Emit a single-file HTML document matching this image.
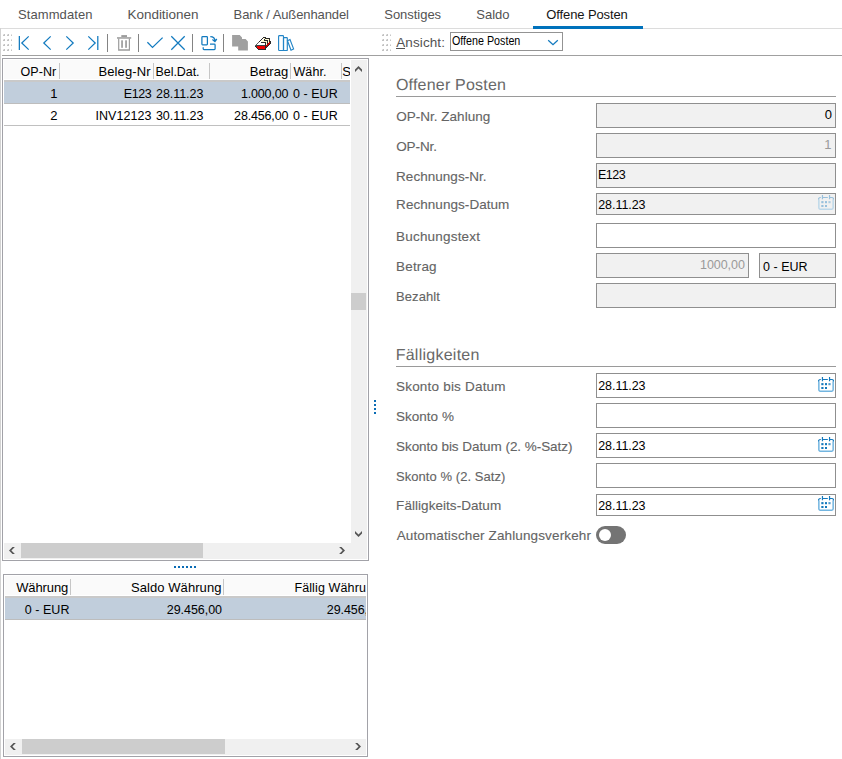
<!DOCTYPE html>
<html lang="de"><head><meta charset="utf-8"><title>Offene Posten</title>
<style>
*{box-sizing:border-box;margin:0;padding:0}
html,body{width:842px;height:759px;background:#fff;overflow:hidden}
body{position:relative;font-family:"Liberation Sans",sans-serif;font-size:13px;color:#000}
.a,.t,svg{position:absolute}
.t{white-space:pre;line-height:20px;height:20px}
.ln{position:absolute;background:#a0a0a0}
.grid{position:absolute;border:1px solid #a2a2a8;background:#fff;overflow:hidden}
.hd{position:absolute;background:#fafafa}
.hs{position:absolute;width:1px;background:#c6c6c6}
.sel{position:absolute;background:#c1cedc}
.sb{position:absolute;background:#f0f0f0}
.th{position:absolute;background:#cdcdcd}
.f{position:absolute;border:1px solid #8f8f8f;background:#fff}
.f.d{background:#f1f1f1}
.dot{position:absolute;width:2px;height:2px;background:#0a6cb5}
.sep{position:absolute;width:1px;height:18px;top:34px;background:#848484}
.clip{position:absolute;overflow:hidden}
.lb .t{-webkit-text-stroke:.12px #666}
</style></head>
<body>
<div class="a" style="left:0;top:28px;width:842px;height:1px;background:#dcdcdc"></div>
<div class="a" style="left:0;top:28px;width:1px;height:731px;background:#d2d2d2"></div>
<div class="a" style="left:533px;top:26px;width:110px;height:3px;background:#0072bc"></div>
<div class="ln" style="left:2px;top:55px;width:840px;height:1px"></div>
<div class="tabs" role="tablist"><span class="t" style="left:18px;top:5px;letter-spacing:0.08px;color:#535353">Stammdaten</span>
<span class="t" style="left:127.6px;top:5px;font-size:13.5px;letter-spacing:-0.05px;color:#535353">Konditionen</span>
<span class="t" style="left:233.6px;top:5px;letter-spacing:-0.1px;color:#535353">Bank / Außenhandel</span>
<span class="t" style="left:384.3px;top:5px;letter-spacing:-0.04px;color:#535353">Sonstiges</span>
<span class="t" style="left:476.3px;top:5px;letter-spacing:-0.01px;color:#535353">Saldo</span>
<span class="t" style="left:546.3px;top:5px;letter-spacing:-0.11px;color:#151515">Offene Posten</span></div>
<div class="toolbar" role="toolbar">
<svg class="grip" style="left:3px;top:34px" width="9" height="17" viewBox="0 0 9 17" shape-rendering="crispEdges"><rect x="0" y="0" width="2" height="2" fill="#c3c3c3"/><rect x="0" y="0" width="1" height="1" fill="#e4e4e4"/><rect x="4" y="0" width="2" height="2" fill="#c3c3c3"/><rect x="4" y="0" width="1" height="1" fill="#e4e4e4"/><rect x="8" y="0" width="1" height="1" fill="#e0e0e0"/><rect x="8" y="1" width="1" height="1" fill="#c6c6c6"/><rect x="0" y="5" width="2" height="2" fill="#c3c3c3"/><rect x="0" y="5" width="1" height="1" fill="#e4e4e4"/><rect x="4" y="5" width="2" height="2" fill="#c3c3c3"/><rect x="4" y="5" width="1" height="1" fill="#e4e4e4"/><rect x="8" y="5" width="1" height="1" fill="#e0e0e0"/><rect x="8" y="6" width="1" height="1" fill="#c6c6c6"/><rect x="0" y="10" width="2" height="2" fill="#c3c3c3"/><rect x="0" y="10" width="1" height="1" fill="#e4e4e4"/><rect x="4" y="10" width="2" height="2" fill="#c3c3c3"/><rect x="4" y="10" width="1" height="1" fill="#e4e4e4"/><rect x="8" y="10" width="1" height="1" fill="#e0e0e0"/><rect x="8" y="11" width="1" height="1" fill="#c6c6c6"/><rect x="0" y="15" width="2" height="2" fill="#c3c3c3"/><rect x="0" y="15" width="1" height="1" fill="#e4e4e4"/><rect x="4" y="15" width="2" height="2" fill="#c3c3c3"/><rect x="4" y="15" width="1" height="1" fill="#e4e4e4"/><rect x="8" y="15" width="1" height="1" fill="#e0e0e0"/><rect x="8" y="16" width="1" height="1" fill="#c6c6c6"/></svg>
<svg class="grip" style="left:382px;top:34px" width="9" height="17" viewBox="0 0 9 17" shape-rendering="crispEdges"><rect x="0" y="0" width="2" height="2" fill="#c3c3c3"/><rect x="0" y="0" width="1" height="1" fill="#e4e4e4"/><rect x="4" y="0" width="2" height="2" fill="#c3c3c3"/><rect x="4" y="0" width="1" height="1" fill="#e4e4e4"/><rect x="8" y="0" width="1" height="1" fill="#e0e0e0"/><rect x="8" y="1" width="1" height="1" fill="#c6c6c6"/><rect x="0" y="5" width="2" height="2" fill="#c3c3c3"/><rect x="0" y="5" width="1" height="1" fill="#e4e4e4"/><rect x="4" y="5" width="2" height="2" fill="#c3c3c3"/><rect x="4" y="5" width="1" height="1" fill="#e4e4e4"/><rect x="8" y="5" width="1" height="1" fill="#e0e0e0"/><rect x="8" y="6" width="1" height="1" fill="#c6c6c6"/><rect x="0" y="10" width="2" height="2" fill="#c3c3c3"/><rect x="0" y="10" width="1" height="1" fill="#e4e4e4"/><rect x="4" y="10" width="2" height="2" fill="#c3c3c3"/><rect x="4" y="10" width="1" height="1" fill="#e4e4e4"/><rect x="8" y="10" width="1" height="1" fill="#e0e0e0"/><rect x="8" y="11" width="1" height="1" fill="#c6c6c6"/><rect x="0" y="15" width="2" height="2" fill="#c3c3c3"/><rect x="0" y="15" width="1" height="1" fill="#e4e4e4"/><rect x="4" y="15" width="2" height="2" fill="#c3c3c3"/><rect x="4" y="15" width="1" height="1" fill="#e4e4e4"/><rect x="8" y="15" width="1" height="1" fill="#e0e0e0"/><rect x="8" y="16" width="1" height="1" fill="#c6c6c6"/></svg>
<svg style="left:0;top:28px" width="300" height="28" viewBox="0 0 300 28">
<g fill="none" stroke="#127abf" stroke-width="1.25">
<path d="M19.35 8v14M28.7 8.4 21.8 15l6.9 6.6"/>
<path d="M50.7 8.4 43.8 15l6.9 6.6"/>
<path d="M66.3 8.4 73.2 15l-6.9 6.6"/>
<path d="M88.3 8.4 95.2 15l-6.9 6.6M97.8 8v14"/>
<path d="M147.4 14.3 152.5 19.4 162.6 9.6"/>
<path d="M171.3 8.3 184.7 21.7M184.7 8.3 171.3 21.7"/>
<rect x="201.9" y="8.7" width="5.5" height="8.1" rx=".7"/>
<path d="M203.2 19.2v1.5a.8.8 0 0 0 .8.8h10.3a.8.8 0 0 0 .8-.8v-3.7a.8.8 0 0 0-.8-.8H210"/>
<path d="M210.3 8.7c2.8 0 4.6 1.5 4.6 4.3M212.4 11.6l2.5 1.9 1.9-2.5"/>
</g>
<g fill="#9c9c9c">
<rect x="121.3" y="7.1" width="5.7" height="1.9"/>
<rect x="117" y="9.2" width="14.2" height="1.5"/>
<path d="M118.1 10.6h11.9V22.8H118.1zM119.3 10.6V21.2h9.5V10.6z" fill-rule="evenodd"/>
<rect x="121.2" y="12.3" width="1.7" height="7.5"/>
<rect x="125.2" y="12.3" width="1.7" height="7.5"/>
</g>
<g fill="#a0a0a0">
<path d="M232.1 7.1h7.6l2.3 2.3v1.7h3.6l2.3 2.3v9.2h-9.7v-4h-6.1z"/>
</g>
<g fill="none" stroke="#2385c7" stroke-width="1.15">
<rect x="278.6" y="7.6" width="4.9" height="14.9" rx=".8"/>
<rect x="283.5" y="9.6" width="3.8" height="12.9" rx=".6"/>
<path d="M287.5 12.7 290 11.5 293.6 20.9 291 22.2z"/>
</g>
</svg>
<svg style="left:254px;top:36px" width="17" height="15" viewBox="0 0 17 15" shape-rendering="crispEdges"><rect x="9" y="1" width="3" height="1" fill="#2b2b2b"/><rect x="8" y="2" width="1" height="1" fill="#2b2b2b"/><rect x="9" y="2" width="2" height="1" fill="#fff8cf"/><rect x="11" y="2" width="5" height="1" fill="#2b2b2b"/><rect x="7" y="3" width="1" height="1" fill="#2b2b2b"/><rect x="8" y="3" width="2" height="1" fill="#ffffff"/><rect x="10" y="3" width="1" height="1" fill="#2b2b2b"/><rect x="11" y="3" width="4" height="1" fill="#fff8cf"/><rect x="15" y="3" width="1" height="1" fill="#2b2b2b"/><rect x="6" y="4" width="1" height="1" fill="#2b2b2b"/><rect x="7" y="4" width="3" height="1" fill="#fff8cf"/><rect x="10" y="4" width="4" height="1" fill="#2b2b2b"/><rect x="14" y="4" width="1" height="1" fill="#fff8cf"/><rect x="15" y="4" width="1" height="1" fill="#2b2b2b"/><rect x="5" y="5" width="1" height="1" fill="#2b2b2b"/><rect x="6" y="5" width="2" height="1" fill="#ffffff"/><rect x="8" y="5" width="5" height="1" fill="#fff8cf"/><rect x="13" y="5" width="1" height="1" fill="#2b2b2b"/><rect x="14" y="5" width="1" height="1" fill="#fff8cf"/><rect x="15" y="5" width="2" height="1" fill="#2b2b2b"/><rect x="4" y="6" width="1" height="1" fill="#606060"/><rect x="5" y="6" width="2" height="1" fill="#ffffff"/><rect x="7" y="6" width="5" height="1" fill="#2b2b2b"/><rect x="12" y="6" width="1" height="1" fill="#fff8cf"/><rect x="13" y="6" width="1" height="1" fill="#2b2b2b"/><rect x="14" y="6" width="1" height="1" fill="#fff8cf"/><rect x="15" y="6" width="1" height="1" fill="#c40000"/><rect x="16" y="6" width="1" height="1" fill="#2b2b2b"/><rect x="3" y="7" width="1" height="1" fill="#606060"/><rect x="4" y="7" width="7" height="1" fill="#ffffff"/><rect x="11" y="7" width="1" height="1" fill="#2b2b2b"/><rect x="12" y="7" width="1" height="1" fill="#fff8cf"/><rect x="13" y="7" width="1" height="1" fill="#2b2b2b"/><rect x="14" y="7" width="2" height="1" fill="#c40000"/><rect x="16" y="7" width="1" height="1" fill="#2b2b2b"/><rect x="2" y="8" width="1" height="1" fill="#606060"/><rect x="3" y="8" width="8" height="1" fill="#ffffff"/><rect x="11" y="8" width="1" height="1" fill="#2b2b2b"/><rect x="12" y="8" width="1" height="1" fill="#fff8cf"/><rect x="13" y="8" width="2" height="1" fill="#c40000"/><rect x="15" y="8" width="1" height="1" fill="#2b2b2b"/><rect x="1" y="9" width="1" height="1" fill="#606060"/><rect x="2" y="9" width="9" height="1" fill="#344848"/><rect x="11" y="9" width="1" height="1" fill="#2b2b2b"/><rect x="12" y="9" width="2" height="1" fill="#c40000"/><rect x="14" y="9" width="1" height="1" fill="#2b2b2b"/><rect x="1" y="10" width="1" height="1" fill="#2b2b2b"/><rect x="2" y="10" width="1" height="1" fill="#344848"/><rect x="3" y="10" width="8" height="1" fill="#f20000"/><rect x="11" y="10" width="1" height="1" fill="#2b2b2b"/><rect x="12" y="10" width="1" height="1" fill="#c40000"/><rect x="13" y="10" width="1" height="1" fill="#2b2b2b"/><rect x="2" y="11" width="1" height="1" fill="#2b2b2b"/><rect x="3" y="11" width="8" height="1" fill="#f20000"/><rect x="11" y="11" width="2" height="1" fill="#2b2b2b"/><rect x="3" y="12" width="1" height="1" fill="#2b2b2b"/><rect x="4" y="12" width="7" height="1" fill="#f20000"/><rect x="11" y="12" width="1" height="1" fill="#2b2b2b"/><rect x="4" y="13" width="8" height="1" fill="#2b2b2b"/></svg>
<div class="sep" style="left:107px"></div>
<div class="sep" style="left:138px"></div>
<div class="sep" style="left:192px"></div>
<div class="sep" style="left:223px"></div>
<span class="t" style="left:396.2px;top:33px;font-size:13.5px;letter-spacing:0.11px;color:#535353">Ansicht:</span>
<div class="a" style="left:396px;top:48px;width:9px;height:1px;background:#535353"></div>
<div class="f" style="left:450px;top:32px;width:113px;height:19px;border-color:#939393"></div>
<span class="t" style="left:452.4px;top:31px;font-size:12px;transform:scaleX(0.893);transform-origin:0 0">Offene Posten</span>
<svg style="left:546px;top:38px" width="14" height="9" viewBox="0 0 14 9"><path d="M2.2 2.3 7 6.7 11.8 2.3" fill="none" stroke="#127abf" stroke-width="1.3"/></svg>
</div>
<div class="grid" role="grid" style="left:2px;top:58px;width:367px;height:503px"><div class="hd" style="left:1px;top:1px;width:346px;height:19px"></div>
<div class="a" style="left:1px;top:21px;width:346px;height:2px;background:#c9c9c9"></div>
<div class="sel" style="left:1px;top:23px;width:346px;height:21px"></div>
<div class="a" style="left:1px;top:44px;width:346px;height:1px;background:#bdbdbd"></div>
<div class="a" style="left:1px;top:66px;width:346px;height:1px;background:#c0c0c0"></div>
<div class="hs" style="left:56px;top:4px;height:16px"></div>
<div class="hs" style="left:150px;top:4px;height:16px"></div>
<div class="hs" style="left:206px;top:4px;height:16px"></div>
<div class="hs" style="left:287px;top:4px;height:16px"></div>
<div class="hs" style="left:338px;top:4px;height:16px"></div>
<div class="sb" style="left:348px;top:1px;width:16px;height:499px"></div>
<div class="sb" style="left:1px;top:484px;width:348px;height:16px"></div>
<div class="th" style="left:348px;top:234px;width:15px;height:17px"></div>
<div class="th" style="left:18px;top:484px;width:182px;height:15px"></div>
<svg style="left:350px;top:5px" width="11" height="11" viewBox="0 0 11 11"><polygon points="5.5,2 9,5.5 9,7.9 5.5,4.4 2,7.9 2,5.5" fill="#555"/></svg>
<svg style="left:350px;top:469px" width="11" height="11" viewBox="0 0 11 11"><polygon points="5.5,8.9 9,5.4 9,3 5.5,6.5 2,3 2,5.4" fill="#555"/></svg>
<svg style="left:4px;top:486px" width="11" height="11" viewBox="0 0 11 11"><polygon points="2,5.5 5.5,9 7.9,9 4.4,5.5 7.9,2 5.5,2" fill="#555"/></svg>
<svg style="left:334px;top:486px" width="11" height="11" viewBox="0 0 11 11"><polygon points="8,5.5 4.5,9 2.1,9 5.6,5.5 2.1,2 4.5,2" fill="#555"/></svg>
<div class="clip" style="left:337px;top:1px;width:10px;height:20px"><span class="t" style="left:2.3px;top:2px">S</span></div>
<span class="t" style="left:17.5px;top:3px;font-size:12.5px;letter-spacing:0.07px">OP-Nr</span>
<span class="t" style="left:95.5px;top:3px;letter-spacing:0.1px">Beleg-Nr</span>
<span class="t" style="left:152.5px;top:3px;font-size:12.5px;letter-spacing:-0.06px">Bel.Dat.</span>
<span class="t" style="left:246.7px;top:3px;letter-spacing:0.03px">Betrag</span>
<span class="t" style="left:290.4px;top:3px;font-size:12.5px;letter-spacing:0.12px">Währ.</span>
<span class="t" style="left:47.3px;top:25px">1</span>
<span class="t" style="left:120.7px;top:25px;font-size:12.5px;letter-spacing:-0.37px">E123</span>
<span class="t" style="left:153px;top:25px;font-size:12.5px;letter-spacing:-0.05px">28.11.23</span>
<span class="t" style="left:238px;top:25px;font-size:12.5px;letter-spacing:-0.18px">1.000,00</span>
<span class="t" style="left:290px;top:25px;font-size:12.5px;letter-spacing:0.04px">0 - EUR</span>
<span class="t" style="left:47.3px;top:47px">2</span>
<span class="t" style="left:92.4px;top:47px;font-size:12.5px;letter-spacing:0.05px">INV12123</span>
<span class="t" style="left:152.9px;top:47px;font-size:12.5px;letter-spacing:-0.04px">30.11.23</span>
<span class="t" style="left:231.1px;top:47px;font-size:12.5px;letter-spacing:-0.16px">28.456,00</span>
<span class="t" style="left:290px;top:47px;font-size:12.5px;letter-spacing:0.04px">0 - EUR</span></div>
<div class="dot" style="left:174px;top:566px"></div>
<div class="dot" style="left:178px;top:566px"></div>
<div class="dot" style="left:182px;top:566px"></div>
<div class="dot" style="left:186px;top:566px"></div>
<div class="dot" style="left:190px;top:566px"></div>
<div class="dot" style="left:194px;top:566px"></div>
<div class="dot" style="left:374px;top:400px"></div>
<div class="dot" style="left:374px;top:404px"></div>
<div class="dot" style="left:374px;top:408px"></div>
<div class="dot" style="left:374px;top:412px"></div>
<div class="grid" role="grid" style="left:3px;top:574px;width:365px;height:183px"><div class="clip" style="left:0;top:0;width:362px;height:181px"><div class="hd" style="left:1px;top:1px;width:362px;height:19px"></div>
<div class="a" style="left:1px;top:21px;width:362px;height:2px;background:#c9c9c9"></div>
<div class="sel" style="left:1px;top:23px;width:362px;height:21px"></div>
<div class="a" style="left:1px;top:44px;width:362px;height:1px;background:#bdbdbd"></div>
<div class="hs" style="left:66px;top:4px;height:16px"></div>
<div class="hs" style="left:219px;top:4px;height:16px"></div>
<div class="sb" style="left:1px;top:164px;width:361px;height:16px"></div>
<div class="th" style="left:18px;top:164px;width:203px;height:15px"></div>
<svg style="left:4px;top:166px" width="11" height="11" viewBox="0 0 11 11"><polygon points="2,5.5 5.5,9 7.9,9 4.4,5.5 7.9,2 5.5,2" fill="#555"/></svg>
<svg style="left:349px;top:166px" width="11" height="11" viewBox="0 0 11 11"><polygon points="8,5.5 4.5,9 2.1,9 5.6,5.5 2.1,2 4.5,2" fill="#555"/></svg>
<span class="t" style="left:12.2px;top:3px;letter-spacing:-0.12px">Währung</span>
<span class="t" style="left:127px;top:3px;letter-spacing:0.07px">Saldo Währung</span>
<span class="t" style="left:290.4px;top:3px;font-size:12.5px;letter-spacing:0.12px">Fällig Währung</span>
<span class="t" style="left:20.7px;top:25px;font-size:12.5px;letter-spacing:0.05px">0 - EUR</span>
<span class="t" style="left:162.8px;top:25px;font-size:12.5px;letter-spacing:-0.05px">29.456,00</span>
<span class="t" style="left:322.8px;top:25px;font-size:12.5px;letter-spacing:-0.09px">29.456,00</span></div></div>
<div class="panel" role="form">
<span class="t" style="left:395.9px;top:76px;font-size:16px;letter-spacing:0.21px;color:#686868;text-rendering:geometricPrecision">Offener Posten</span>
<span class="t" style="left:395.7px;top:346px;font-size:16px;letter-spacing:0.25px;color:#686868;text-rendering:geometricPrecision">Fälligkeiten</span>
<div class="ln" style="left:396px;top:96px;width:440px;height:1px;background:#9a9a9a"></div>
<div class="ln" style="left:396px;top:366px;width:440px;height:1px;background:#9a9a9a"></div>
<div class="lb"><span class="t" style="left:396.2px;top:107px;font-size:13.5px;letter-spacing:0.02px;color:#646464">OP-Nr. Zahlung</span>
<span class="t" style="left:396.2px;top:137px;font-size:13.5px;letter-spacing:-0.1px;color:#646464">OP-Nr.</span>
<span class="t" style="left:396.1px;top:167px;font-size:13.5px;letter-spacing:0.03px;color:#646464">Rechnungs-Nr.</span>
<span class="t" style="left:396.1px;top:195px;font-size:13.5px;letter-spacing:0.05px;color:#646464">Rechnungs-Datum</span>
<span class="t" style="left:396.1px;top:227px;font-size:13.5px;letter-spacing:0.19px;color:#646464">Buchungstext</span>
<span class="t" style="left:396.1px;top:257px;font-size:13.5px;letter-spacing:0.14px;color:#646464">Betrag</span>
<span class="t" style="left:396.1px;top:287px;letter-spacing:0.06px;color:#646464">Bezahlt</span>
<span class="t" style="left:396px;top:377px;font-size:13.5px;letter-spacing:0.2px;color:#646464">Skonto bis Datum</span>
<span class="t" style="left:396px;top:407px;font-size:13.5px;letter-spacing:0.02px;color:#646464">Skonto %</span>
<span class="t" style="left:396px;top:437px;font-size:13.5px;letter-spacing:-0.05px;color:#646464">Skonto bis Datum (2. %-Satz)</span>
<span class="t" style="left:396px;top:467px;letter-spacing:0.06px;color:#646464">Skonto % (2. Satz)</span>
<span class="t" style="left:396.1px;top:496px;font-size:13.5px;letter-spacing:0.05px;color:#646464">Fälligkeits-Datum</span>
<span class="t" style="left:396.7px;top:526px;font-size:13.5px;letter-spacing:0.13px;color:#646464">Automatischer Zahlungsverkehr</span></div>
<div class="f d" style="left:596px;top:103px;width:240px;height:25px"></div>
<div class="f d" style="left:596px;top:133px;width:240px;height:25px"></div>
<div class="f d" style="left:596px;top:163px;width:240px;height:25px"></div>
<div class="f d" style="left:596px;top:193px;width:240px;height:22px"></div>
<div class="f" style="left:596px;top:223px;width:240px;height:25px"></div>
<div class="f d" style="left:596px;top:253px;width:153px;height:25px"></div>
<div class="f d" style="left:759px;top:253px;width:77px;height:25px"></div>
<div class="f d" style="left:596px;top:283px;width:240px;height:25px"></div>
<div class="f" style="left:596px;top:373px;width:240px;height:25px"></div>
<div class="f" style="left:596px;top:403px;width:240px;height:25px"></div>
<div class="f" style="left:596px;top:433px;width:240px;height:25px"></div>
<div class="f" style="left:596px;top:463px;width:240px;height:25px"></div>
<div class="f" style="left:596px;top:494px;width:240px;height:22px"></div>
<span class="t" style="left:824.7px;top:105px">0</span>
<span class="t" style="left:824.3px;top:135px;color:#9a9a9a">1</span>
<span class="t" style="left:597.9px;top:165px;font-size:12.5px;letter-spacing:-0.5px">E123</span>
<span class="t" style="left:598.2px;top:195px;font-size:12.5px;letter-spacing:-0.05px">28.11.23</span>
<span class="t" style="left:700.1px;top:255px;font-size:12.5px;letter-spacing:-0.07px;color:#9a9a9a">1000,00</span>
<span class="t" style="left:762.9px;top:257px;font-size:12.5px;letter-spacing:0.05px">0 - EUR</span>
<span class="t" style="left:598.2px;top:376px;font-size:12.5px;letter-spacing:-0.05px">28.11.23</span>
<span class="t" style="left:598.2px;top:436px;font-size:12.5px;letter-spacing:-0.05px">28.11.23</span>
<span class="t" style="left:598.2px;top:496px;font-size:12.5px;letter-spacing:-0.05px">28.11.23</span>
<svg style="left:818px;top:195px" width="16" height="16" viewBox="0 0 16 16" opacity="0.4">
<path d="M.85 4.2V12.8a1.4 1.4 0 0 0 1.4 1.4H13.75a1.4 1.4 0 0 0 1.4-1.4V4.2" fill="none" stroke="#72b5e0" stroke-width="1.5"/>
<path d="M.4 4.4A1.9 1.9 0 0 1 2.3 2.5h.5M4.45 2.5H9.8M11.55 2.5h2.15A1.9 1.9 0 0 1 15.6 4.4" fill="none" stroke="#1479bd" stroke-width="1.15"/>
<path d="M4.45 0v4.3M11.55 0v4.3" stroke="#1479bd" stroke-width="1.2" fill="none"/>
<g fill="#1479bd"><rect x="3.3" y="6.1" width="2.2" height="2.1"/><rect x="7" y="6.1" width="2" height="2.1"/><rect x="10.4" y="6.1" width="2.2" height="2.1" opacity=".75"/><rect x="3.3" y="10" width="2.2" height="2"/><rect x="7" y="10" width="2" height="2"/></g>
</svg>
<svg style="left:818px;top:377px" width="16" height="16" viewBox="0 0 16 16">
<path d="M.85 4.2V12.8a1.4 1.4 0 0 0 1.4 1.4H13.75a1.4 1.4 0 0 0 1.4-1.4V4.2" fill="none" stroke="#72b5e0" stroke-width="1.5"/>
<path d="M.4 4.4A1.9 1.9 0 0 1 2.3 2.5h.5M4.45 2.5H9.8M11.55 2.5h2.15A1.9 1.9 0 0 1 15.6 4.4" fill="none" stroke="#1479bd" stroke-width="1.15"/>
<path d="M4.45 0v4.3M11.55 0v4.3" stroke="#1479bd" stroke-width="1.2" fill="none"/>
<g fill="#1479bd"><rect x="3.3" y="6.1" width="2.2" height="2.1"/><rect x="7" y="6.1" width="2" height="2.1"/><rect x="10.4" y="6.1" width="2.2" height="2.1" opacity=".75"/><rect x="3.3" y="10" width="2.2" height="2"/><rect x="7" y="10" width="2" height="2"/></g>
</svg>
<svg style="left:818px;top:437px" width="16" height="16" viewBox="0 0 16 16">
<path d="M.85 4.2V12.8a1.4 1.4 0 0 0 1.4 1.4H13.75a1.4 1.4 0 0 0 1.4-1.4V4.2" fill="none" stroke="#72b5e0" stroke-width="1.5"/>
<path d="M.4 4.4A1.9 1.9 0 0 1 2.3 2.5h.5M4.45 2.5H9.8M11.55 2.5h2.15A1.9 1.9 0 0 1 15.6 4.4" fill="none" stroke="#1479bd" stroke-width="1.15"/>
<path d="M4.45 0v4.3M11.55 0v4.3" stroke="#1479bd" stroke-width="1.2" fill="none"/>
<g fill="#1479bd"><rect x="3.3" y="6.1" width="2.2" height="2.1"/><rect x="7" y="6.1" width="2" height="2.1"/><rect x="10.4" y="6.1" width="2.2" height="2.1" opacity=".75"/><rect x="3.3" y="10" width="2.2" height="2"/><rect x="7" y="10" width="2" height="2"/></g>
</svg>
<svg style="left:818px;top:496px" width="16" height="16" viewBox="0 0 16 16">
<path d="M.85 4.2V12.8a1.4 1.4 0 0 0 1.4 1.4H13.75a1.4 1.4 0 0 0 1.4-1.4V4.2" fill="none" stroke="#72b5e0" stroke-width="1.5"/>
<path d="M.4 4.4A1.9 1.9 0 0 1 2.3 2.5h.5M4.45 2.5H9.8M11.55 2.5h2.15A1.9 1.9 0 0 1 15.6 4.4" fill="none" stroke="#1479bd" stroke-width="1.15"/>
<path d="M4.45 0v4.3M11.55 0v4.3" stroke="#1479bd" stroke-width="1.2" fill="none"/>
<g fill="#1479bd"><rect x="3.3" y="6.1" width="2.2" height="2.1"/><rect x="7" y="6.1" width="2" height="2.1"/><rect x="10.4" y="6.1" width="2.2" height="2.1" opacity=".75"/><rect x="3.3" y="10" width="2.2" height="2"/><rect x="7" y="10" width="2" height="2"/></g>
</svg>
<div class="a" style="left:596px;top:526px;width:30px;height:18px;border-radius:9px;background:#747474"></div>
<div class="a" style="left:599px;top:529px;width:12px;height:12px;border-radius:6px;background:#fff"></div>
</div>
</body></html>
